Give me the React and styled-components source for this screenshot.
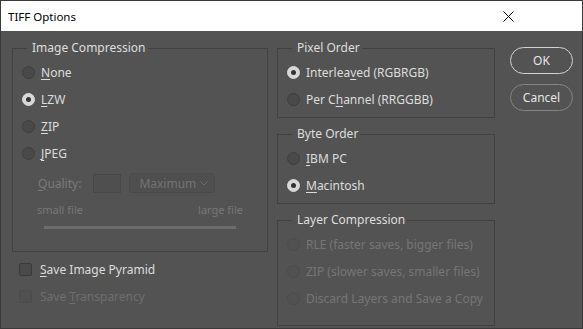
import styled, { createGlobalStyle } from "styled-components";

const GlobalStyle = createGlobalStyle`
  html, body {
    margin: 0;
    padding: 0;
    background: #535353;
  }
  body {
    font-family: "Noto Sans", "Open Sans", sans-serif;
  }
`;

const Window = styled.div`
  width: 583px;
  height: 329px;
  box-sizing: border-box;
  border: 1px solid #3a3a3a;
  background: #535353;
  display: flex;
  flex-direction: column;
`;

const TitleBar = styled.div`
  height: 30px;
  flex: none;
  background: #ffffff;
  display: flex;
  align-items: center;
  justify-content: space-between;
  padding: 0 68px 0 7px;
  font-size: 11.5px;
  color: #000;
`;

const Body = styled.div`
  flex: 1;
  display: flex;
  padding: 9px 0 0 11px;
  color: #dcdcdc;
  font-size: 12px;
`;

const Column = styled.div`
  width: ${(p) => p.$width}px;
  margin-right: ${(p) => p.$gap || 0}px;
  display: flex;
  flex-direction: column;
  gap: ${(p) => p.$spacing || 0}px;
`;

const Group = styled.fieldset`
  margin: 0;
  padding: 3px 0 0;
  border: 1px solid #414141;
  height: ${(p) => p.$height}px;
  box-sizing: border-box;
  min-width: 0;
`;

const Legend = styled.legend`
  margin-left: 14px;
  padding: 0 2px 0 5px;
  line-height: 16px;
  font-size: 12px;
  color: #dedede;
`;

const Row = styled.div`
  height: 27px;
  display: flex;
  align-items: center;
  padding-left: 9px;
  gap: 6px;
  color: ${(p) => (p.$disabled ? "#767676" : "#dcdcdc")};
`;

const Radio = styled.span`
  width: 13px;
  height: 13px;
  box-sizing: border-box;
  border-radius: 50%;
  flex: none;
  display: flex;
  align-items: center;
  justify-content: center;
  background: ${(p) =>
    p.$checked ? "#d8d8d8" : p.$disabled ? "#515151" : "#494949"};
  border: 1px solid
    ${(p) => (p.$checked ? "#d8d8d8" : p.$disabled ? "#4c4c4c" : "#3e3e3e")};

  &::after {
    content: "";
    display: ${(p) => (p.$checked ? "block" : "none")};
    width: 5px;
    height: 5px;
    border-radius: 50%;
    background: #333;
  }
`;

const Key = styled.span`
  text-decoration: underline;
  text-underline-offset: 2px;
`;

const QualityRow = styled.div`
  margin-top: 6px;
  height: 20px;
  display: flex;
  align-items: center;
  padding-left: 25px;
  color: #7a7a7a;
`;

const QualityInput = styled.span`
  width: 28px;
  height: 19px;
  box-sizing: border-box;
  margin-left: 12px;
  border: 1px solid #474747;
  background: #4f4f4f;
`;

const Select = styled.span`
  width: 86px;
  height: 20px;
  box-sizing: border-box;
  margin-left: 8px;
  border: 1px solid #4a4a4a;
  border-radius: 3px;
  background: #4f4f4f;
  display: flex;
  align-items: center;
  justify-content: space-between;
  padding: 0 6px 0 9px;
  color: #747474;
`;

const ScaleLabels = styled.div`
  margin-top: 9px;
  height: 14px;
  display: flex;
  justify-content: space-between;
  align-items: center;
  padding: 0 24px;
  font-size: 11px;
  color: #777;
`;

const Track = styled.div`
  margin: 10px 31px 0;
  height: 3px;
  background: #6c6c6c;
`;

const CheckRow = styled.div`
  height: 27px;
  display: flex;
  align-items: center;
  padding-left: 7px;
  gap: 8px;
  color: ${(p) => (p.$disabled ? "#6e6e6e" : "#dcdcdc")};
`;

const Checks = styled.div`
  margin-top: 4px;
`;

const Checkbox = styled.span`
  width: 13px;
  height: 13px;
  box-sizing: border-box;
  border-radius: 2px;
  border: 1px solid ${(p) => (p.$disabled ? "#4b4b4b" : "#3a3a3a")};
  background: ${(p) => (p.$disabled ? "#505050" : "#4a4a4a")};
`;

const Buttons = styled.div`
  margin-left: 15px;
  padding-top: 7px;
  display: flex;
  flex-direction: column;
  gap: 10px;
`;

const Button = styled.button`
  width: 63px;
  height: 27px;
  border-radius: 14px;
  border: 1px solid ${(p) => (p.$primary ? "#d2d2d2" : "#858585")};
  background: transparent;
  color: #e6e6e6;
  font-family: inherit;
  font-size: 12px;
  padding: 0;
`;

const CloseIcon = () => (
  <svg width="11" height="11" viewBox="0 0 11 11">
    <path d="M0.5 0.5 L10.5 10.5 M10.5 0.5 L0.5 10.5" stroke="#000" strokeWidth="1" />
  </svg>
);

const Chevron = () => (
  <svg width="8" height="5" viewBox="0 0 8 5">
    <path d="M0.5 0.5 L4 4 L7.5 0.5" stroke="#6e6e6e" fill="none" strokeWidth="1" />
  </svg>
);

const RadioItem = ({ checked, disabled, children }) => (
  <Row $disabled={disabled}>
    <Radio $checked={checked} $disabled={disabled} />
    <span>{children}</span>
  </Row>
);

const App = () => {
  return (
    <>
      <GlobalStyle />
      <Window>
        <TitleBar>
          <span>TIFF Options</span>
          <CloseIcon />
        </TitleBar>
        <Body>
          <Column $width={256} $gap={9}>
            <Group $height={212}>
              <Legend>Image Compression</Legend>
              <RadioItem>
                <Key>N</Key>one
              </RadioItem>
              <RadioItem checked>
                <Key>L</Key>ZW
              </RadioItem>
              <RadioItem>
                <Key>Z</Key>IP
              </RadioItem>
              <RadioItem>
                <Key>J</Key>PEG
              </RadioItem>
              <QualityRow>
                <span>
                  <Key>Q</Key>uality:
                </span>
                <QualityInput />
                <Select>
                  Maximum
                  <Chevron />
                </Select>
              </QualityRow>
              <ScaleLabels>
                <span>small file</span>
                <span>large file</span>
              </ScaleLabels>
              <Track />
            </Group>
            <Checks>
              <CheckRow>
                <Checkbox />
                <span>
                  <Key>S</Key>ave Image Pyramid
                </span>
              </CheckRow>
              <CheckRow $disabled>
                <Checkbox $disabled />
                <span>
                  Save <Key>T</Key>ransparency
                </span>
              </CheckRow>
            </Checks>
          </Column>
          <Column $width={218} $spacing={8}>
            <Group $height={78}>
              <Legend>Pixel Order</Legend>
              <RadioItem checked>
                Interlea<Key>v</Key>ed (RGBRGB)
              </RadioItem>
              <RadioItem>
                Per C<Key>h</Key>annel (RRGGBB)
              </RadioItem>
            </Group>
            <Group $height={78}>
              <Legend>Byte Order</Legend>
              <RadioItem>
                <Key>I</Key>BM PC
              </RadioItem>
              <RadioItem checked>
                <Key>M</Key>acintosh
              </RadioItem>
            </Group>
            <Group $height={114}>
              <Legend>Layer Compression</Legend>
              <RadioItem disabled>RLE (faster saves, bigger files)</RadioItem>
              <RadioItem disabled>ZIP (slower saves, smaller files)</RadioItem>
              <RadioItem disabled>Discard Layers and Save a Copy</RadioItem>
            </Group>
          </Column>
          <Buttons>
            <Button $primary>OK</Button>
            <Button>Cancel</Button>
          </Buttons>
        </Body>
      </Window>
    </>
  );
};

export default App;
